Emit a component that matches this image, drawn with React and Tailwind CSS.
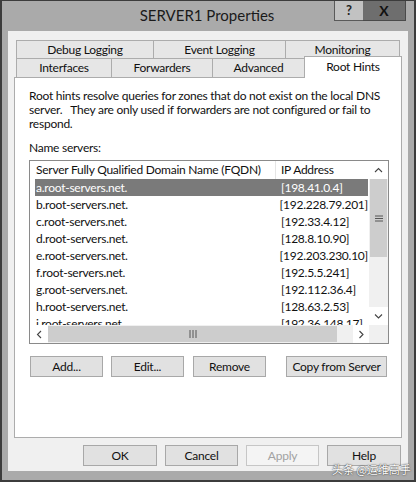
import React from "react";

const rows = [
  ["a.root-servers.net.", "[198.41.0.4]"],
  ["b.root-servers.net.", "[192.228.79.201]"],
  ["c.root-servers.net.", "[192.33.4.12]"],
  ["d.root-servers.net.", "[128.8.10.90]"],
  ["e.root-servers.net.", "[192.203.230.10]"],
  ["f.root-servers.net.", "[192.5.5.241]"],
  ["g.root-servers.net.", "[192.112.36.4]"],
  ["h.root-servers.net.", "[128.63.2.53]"],
  ["i.root-servers.net.", "[192.36.148.17]"],
];

function Chevron({ dir }) {
  const d = {
    up: "M1 5 L4.5 1.5 L8 5",
    down: "M1 1.5 L4.5 5 L8 1.5",
    left: "M5 1 L1.5 4.5 L5 8",
    right: "M1.5 1 L5 4.5 L1.5 8",
  }[dir];
  const vert = dir === "up" || dir === "down";
  return (
    <svg width={vert ? 9 : 7} height={vert ? 7 : 9} viewBox={vert ? "0 0 9 7" : "0 0 7 9"}>
      <path d={d} fill="none" stroke="#444" strokeWidth="1.1" />
    </svg>
  );
}

function Btn({ children, w, disabled, className = "" }) {
  return (
    <div
      className={
        "h-[21px] flex items-center justify-center border text-[12px] whitespace-nowrap " +
        (disabled
          ? "bg-[#f4f4f4] border-[#c6c6c6] text-[#a2a2a2] "
          : "bg-[#e1e1e1] border-[#a8a8a8] text-[#111] ") +
        className
      }
      style={{ width: w }}
    >
      {children}
    </div>
  );
}

export default function App() {
  return (
    <div className="w-[416px] h-[482px] bg-[#aaaaaa] border-x-2 border-b-2 border-t border-[#3c3c3c] flex flex-col relative overflow-hidden [font-family:Lato,'Noto_Sans',sans-serif] tracking-[-0.25px] text-[#111]">
      {/* Title bar */}
      <div className="h-[30px] flex items-start">
        <div className="flex-1 h-full flex items-center justify-center pl-[78px] text-[15px] tracking-normal text-[#1a1a1a] pb-[2px] whitespace-nowrap">
          SERVER1 Properties
        </div>
        <div className="flex mr-[8px] tracking-normal">
          <div className="w-[29px] h-[20px] bg-[#c2c2c2] border-l border-b border-[#5a5a5a] flex items-center justify-center text-[13px] font-bold text-[#222]">
            ?
          </div>
          <div className="w-[43px] h-[20px] bg-[#6e6e6e] border-b border-r border-[#4a4a4a] flex items-center justify-center text-[14px] font-bold text-[#111]">
            X
          </div>
        </div>
      </div>

      {/* Client area */}
      <div className="mx-[6px] h-[440px] bg-[#f0f0f0] flex flex-col">
        <div className="pt-[9px] pl-[6px]">
          {/* Tab row 1 */}
          <div className="flex h-[18px] ml-[2px] text-[12px] whitespace-nowrap">
            <div className="w-[137px] border-t border-l border-[#acacac] bg-[#e6e6e6] flex items-center justify-center">
              Debug Logging
            </div>
            <div className="w-[132px] border-t border-l border-[#acacac] bg-[#e6e6e6] flex items-center justify-center">
              Event Logging
            </div>
            <div className="w-[115px] border-t border-l border-r border-[#acacac] bg-[#e6e6e6] flex items-center justify-center">
              Monitoring
            </div>
          </div>
          {/* Tab row 2 */}
          <div className="flex h-[19px] ml-[2px] text-[12px] whitespace-nowrap">
            <div className="w-[95px] border-t border-l border-[#acacac] bg-[#e6e6e6] flex items-center justify-center">
              Interfaces
            </div>
            <div className="w-[101px] border-t border-l border-[#acacac] bg-[#e6e6e6] flex items-center justify-center">
              Forwarders
            </div>
            <div className="w-[92px] border-t border-l border-[#acacac] bg-[#e6e6e6] flex items-center justify-center">
              Advanced
            </div>
            <div className="relative z-10 -mt-[2px] w-[98px] h-[22px] border-t border-l border-r border-[#acacac] bg-white flex justify-center pt-[1px]">
              Root Hints
            </div>
          </div>

          {/* Panel */}
          <div className="w-[388px] h-[361px] border border-[#acacac] bg-white pt-[11px] pl-[14px] text-[12px]">
            <div className="leading-[14px] whitespace-pre">
              Root hints resolve queries for zones that do not exist on the local DNS
              <br />
              {"server.   They are only used if forwarders are not configured or fail to"}
              <br />
              respond.
            </div>
            <div className="mt-[10px] leading-[14px]">Name servers:</div>

            {/* List box */}
            <div className="mt-[5px] w-[360px] h-[184px] border border-[#8a8a8a] bg-white flex flex-col whitespace-nowrap">
              <div className="flex h-[164px]">
                <div className="w-[339px] h-full overflow-hidden flex flex-col">
                  <div className="h-[18px] flex items-center shrink-0">
                    <div className="w-[245px] pl-[6px] h-full flex items-center">
                      Server Fully Qualified Domain Name (FQDN)
                    </div>
                    <div className="w-px h-full bg-[#e5e5e5]" />
                    <div className="pl-[5px] h-full flex items-center">IP Address</div>
                  </div>
                  <div className="pl-[5px] pr-[1px]">
                    {rows.map(([n, ip], i) => (
                      <div
                        key={n}
                        className={
                          "h-[17px] flex items-center " +
                          (i === 0 ? "bg-[#7a7a7a] text-white" : "")
                        }
                      >
                        <div className="w-[245px] pl-[1px]">{n}</div>
                        <div className="pl-[1px]">{ip}</div>
                      </div>
                    ))}
                  </div>
                </div>
                {/* Vertical scrollbar */}
                <div className="w-[19px] h-full bg-[#f0f0f0] flex flex-col">
                  <div className="h-[18px] flex items-center justify-center bg-white">
                    <Chevron dir="up" />
                  </div>
                  <div className="h-[78px] mx-[1px] bg-[#cdcdcd] flex items-center justify-center">
                    <svg width="8" height="7" viewBox="0 0 8 7">
                      <path d="M0 1 H8 M0 3.5 H8 M0 6 H8" stroke="#555" strokeWidth="1" />
                    </svg>
                  </div>
                  <div className="flex-1" />
                  <div className="h-[18px] flex items-center justify-center bg-white">
                    <Chevron dir="down" />
                  </div>
                </div>
              </div>
              {/* Horizontal scrollbar */}
              <div className="flex h-[18px]">
                <div className="w-[339px] flex bg-[#f0f0f0]">
                  <div className="w-[18px] flex items-center justify-center bg-white">
                    <Chevron dir="left" />
                  </div>
                  <div className="w-[289px] my-[1px] bg-[#cdcdcd] flex items-center justify-center">
                    <svg width="8" height="8" viewBox="0 0 8 8">
                      <path d="M1 0 V8 M4 0 V8 M7 0 V8" stroke="#555" strokeWidth="1" />
                    </svg>
                  </div>
                  <div className="flex-1" />
                  <div className="w-[16px] flex items-center justify-center bg-white">
                    <Chevron dir="right" />
                  </div>
                </div>
                <div className="w-[19px] bg-[#f0f0f0]" />
              </div>
            </div>

            {/* Buttons */}
            <div className="flex mt-[12px] ml-[1px]">
              <Btn w={73}>Add...</Btn>
              <Btn w={73} className="ml-[8px]">Edit...</Btn>
              <Btn w={73} className="ml-[9px]">Remove</Btn>
              <Btn w={101} className="ml-[20px]">Copy from Server</Btn>
            </div>
          </div>
        </div>

        {/* Bottom buttons */}
        <div className="flex mt-[7px] pl-[75px]">
          <Btn w={74}>OK</Btn>
          <Btn w={73} className="ml-[8px]">Cancel</Btn>
          <Btn w={73} className="ml-[8px]" disabled>Apply</Btn>
          <Btn w={74} className="ml-[8px]">Help</Btn>
        </div>
      </div>

      {/* Watermark */}
      <div className="absolute left-[330px] top-[460px] text-[11px] tracking-normal text-white whitespace-nowrap [font-family:'Noto_Sans_CJK_SC',sans-serif] [text-shadow:0_0_1px_#333,0_0_2px_#555]">
        头条 @运维高手
      </div>
    </div>
  );
}
